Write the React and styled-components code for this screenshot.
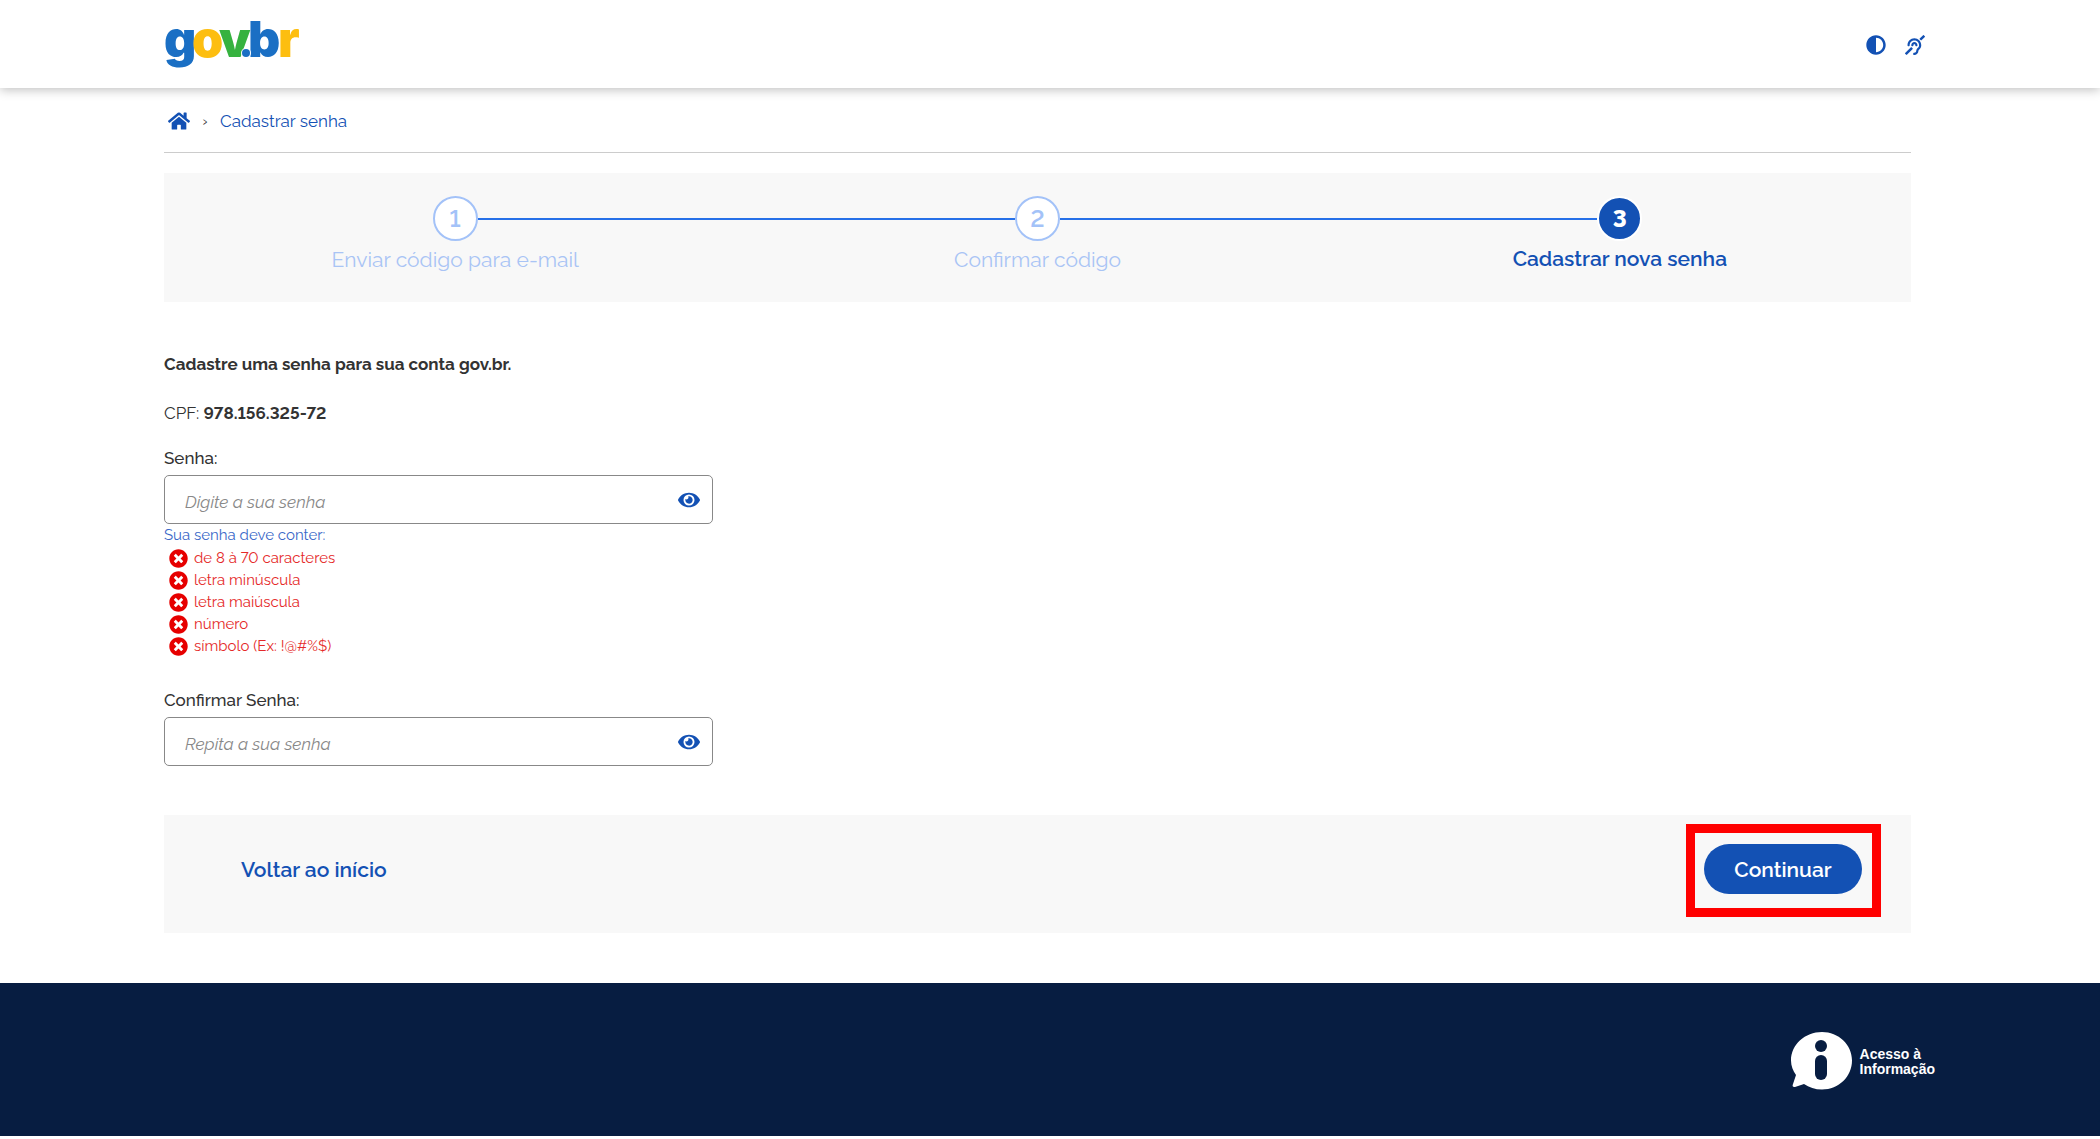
import React, { useState } from 'react';
import styled, { createGlobalStyle } from 'styled-components';
import { FaAdjust, FaDeaf, FaEye, FaHome, FaTimesCircle } from 'react-icons/fa';

const GlobalStyle = createGlobalStyle`
  * {
    box-sizing: border-box;
  }

  body {
    margin: 0;
    background: #ffffff;
    color: #333333;
    font-family: Raleway, Lato, sans-serif;
    font-size: 17px;
    font-variant-numeric: lining-nums;
    line-height: 24px;
  }

  button,
  input {
    font-family: inherit;
  }
`;

const Header = styled.header`
  display: flex;
  align-items: center;
  justify-content: space-between;
  height: 88px;
  padding: 0 175px 0 164px;
  background: #ffffff;
  box-shadow: 0 2px 10px rgba(0, 0, 0, 0.25);
`;

const LogoLink = styled.a`
  display: block;
  height: 80px;
`;

const LogoText = styled.text`
  font-family: Inter, sans-serif;
  font-size: 50px;
  font-weight: 900;
`;

const HeaderActions = styled.div`
  display: flex;
  gap: 19px;
  padding-top: 1px;
`;

const IconButton = styled.button`
  display: flex;
  padding: 0;
  border: 0;
  background: none;
  color: #1351b4;
  font-size: ${({ $size }) => $size}px;
  cursor: pointer;
`;

const Main = styled.main`
  padding: 0 189px 50px 164px;
`;

const Breadcrumb = styled.nav`
  display: flex;
  align-items: center;
  height: 65px;
  padding: 1px 0 0 4px;
  border-bottom: 1px solid #cccccc;
`;

const BreadcrumbLink = styled.a`
  display: flex;
  color: #1351b4;
  font-size: ${({ $size }) => $size}px;
  text-decoration: none;
`;

const Separator = styled.span`
  width: 30px;
  color: #333333;
  font-size: 14px;
  text-align: center;
`;

const Stepper = styled.ol`
  display: grid;
  grid-template-columns: repeat(3, 1fr);
  height: 129px;
  margin: 20px 0 0;
  padding: 23px 0 0;
  background: #f8f8f8;
  list-style: none;
`;

const Step = styled.li`
  display: flex;
  flex-direction: column;
  align-items: center;
  gap: ${({ $active }) => ($active ? 6 : 7)}px;
  color: ${({ $active }) => ($active ? '#1351b4' : '#a9c4f5')};
  font-size: 21px;
  font-weight: ${({ $active }) => ($active ? 600 : 400)};
`;

const StepTrack = styled.div`
  display: grid;
  grid-template-columns: 1fr auto 1fr;
  align-items: center;
  width: 100%;
`;

const StepLine = styled.span`
  height: 2px;
  background: ${({ $visible }) => ($visible ? '#2670e8' : 'transparent')};
`;

const StepNumber = styled.span`
  display: flex;
  align-items: center;
  justify-content: center;
  width: 45px;
  height: 45px;
  border: 2px solid ${({ $active }) => ($active ? '#ffffff' : '#a3c2f8')};
  border-radius: 50%;
  background: ${({ $active }) => ($active ? '#1351b4' : '#ffffff')};
  color: ${({ $active }) => ($active ? '#ffffff' : '#a3c2f8')};
  font-size: 24px;
  font-weight: ${({ $active }) => ($active ? 800 : 600)};
`;

const Title = styled.h1`
  margin: 50px 0 25px;
  font-size: 17px;
  font-weight: 700;
  line-height: 24px;
`;

const Cpf = styled.p`
  margin: 0 0 21px;
`;

const Field = styled.div`
  max-width: 549px;
  margin-top: ${({ $spaced }) => ($spaced ? 31 : 0)}px;
`;

const Label = styled.label`
  display: block;
  margin-bottom: 5px;
  font-weight: 500;
`;

const InputBox = styled.div`
  display: flex;
  align-items: center;
  height: 49px;
  padding-right: 12px;
  border: 1px solid #888888;
  border-radius: 5px;
`;

const Input = styled.input`
  flex: 1;
  min-width: 0;
  height: 100%;
  padding: 4px 20px 0;
  border: 0;
  outline: 0;
  background: none;
  color: #333333;
  font-size: 17px;

  &::placeholder {
    color: #888888;
    font-style: italic;
    opacity: 1;
  }
`;

const Rules = styled.div`
  color: #3a68c8;
  font-size: 15px;
  line-height: 22px;
`;

const RuleList = styled.ul`
  margin: 0;
  padding: 1px 0 0 5px;
  list-style: none;
`;

const Rule = styled.li`
  display: flex;
  align-items: center;
  gap: 6px;
  color: #e52929;

  svg {
    color: #e60000;
    font-size: 19px;
  }
`;

const Actions = styled.div`
  display: flex;
  align-items: flex-start;
  justify-content: space-between;
  height: 118px;
  margin-top: 49px;
  padding: 9px 30px 0 77px;
  background: #f8f8f8;
`;

const BackLink = styled.a`
  margin-top: 34px;
  color: #1351b4;
  font-size: 21px;
  font-weight: 600;
  text-decoration: none;
`;

const Highlight = styled.div`
  height: 93px;
  padding: 11px 10px 0 9px;
  border: 9px solid #ff0000;
`;

const SubmitButton = styled.button`
  width: 158px;
  height: 50px;
  border: 0;
  border-radius: 25px;
  background: #1351b4;
  color: #ffffff;
  font-size: 21px;
  font-weight: 600;
  cursor: pointer;
`;

const Footer = styled.footer`
  display: flex;
  justify-content: flex-end;
  height: 153px;
  padding: 49px 165px 0;
  background: #071d41;
`;

const InfoLink = styled.a`
  display: flex;
  align-items: flex-start;
  gap: 8px;
  color: #ffffff;
  font-family: 'Liberation Sans', sans-serif;
  font-size: 14px;
  font-weight: 700;
  line-height: 15px;
  text-decoration: none;

  span {
    margin-top: 15px;
  }
`;

const STEPS = ['Enviar código para e-mail', 'Confirmar código', 'Cadastrar nova senha'];
const CURRENT_STEP = 2;

const RULES = [
  'de 8 à 70 caracteres',
  'letra minúscula',
  'letra maiúscula',
  'número',
  'símbolo (Ex: !@#%$)',
];

const Logo = () => (
  <svg width="144" height="80" viewBox="0 0 144 80" role="img" aria-label="gov.br">
    <LogoText x="0" y="53" fill="#1a6fc4">g</LogoText>
    <LogoText x="28" y="53" fill="#fdbe10">o</LogoText>
    <LogoText x="55" y="53" fill="#36b23f">v</LogoText>
    <LogoText x="84" y="53" fill="#1a6fc4">b</LogoText>
    <LogoText x="114" y="53" fill="#fdbe10">r</LogoText>
    <circle cx="82" cy="49" r="5" fill="#ffffff" />
    <circle cx="82" cy="49" r="4" fill="#1a6fc4" />
  </svg>
);

const InfoIcon = () => (
  <svg width="61" height="58" viewBox="0 0 61 58" aria-hidden="true">
    <path
      d="M31 0C47.500 0 61 12.500 61 28.500S48 57.500 31 57.500C24 57.500 18 55.500 13 52L4 55C2 55.500 1 54 2 52L5 43C2 39 0 34 0 28.500C0 12.500 14 0 31 0Z"
      fill="#ffffff"
    />
    <circle cx="30" cy="14" r="6" fill="#071d41" />
    <rect x="24" y="23" width="12" height="25" rx="6" fill="#071d41" />
  </svg>
);

const PasswordField = ({ id, label, placeholder, spaced, children }) => {
  const [visible, setVisible] = useState(false);

  return (
    <Field $spaced={spaced}>
      <Label htmlFor={id}>{label}</Label>
      <InputBox>
        <Input id={id} type={visible ? 'text' : 'password'} placeholder={placeholder} />
        <IconButton
          type="button"
          $size={22}
          aria-label="Mostrar senha"
          onClick={() => setVisible(!visible)}
        >
          <FaEye />
        </IconButton>
      </InputBox>
      {children}
    </Field>
  );
};

export default function App() {
  return (
    <>
      <GlobalStyle />
      <Header>
        <LogoLink href="#">
          <Logo />
        </LogoLink>
        <HeaderActions>
          <IconButton type="button" $size={20} aria-label="Alto contraste">
            <FaAdjust />
          </IconButton>
          <IconButton type="button" $size={20} aria-label="VLibras">
            <FaDeaf />
          </IconButton>
        </HeaderActions>
      </Header>

      <Main>
        <Breadcrumb>
          <BreadcrumbLink href="#" $size={22} aria-label="Início">
            <FaHome />
          </BreadcrumbLink>
          <Separator>›</Separator>
          <BreadcrumbLink href="#" $size={17}>
            Cadastrar senha
          </BreadcrumbLink>
        </Breadcrumb>

        <Stepper>
          {STEPS.map((step, i) => (
            <Step key={step} $active={i === CURRENT_STEP}>
              <StepTrack>
                <StepLine $visible={i > 0} />
                <StepNumber $active={i === CURRENT_STEP}>{i + 1}</StepNumber>
                <StepLine $visible={i < STEPS.length - 1} />
              </StepTrack>
              {step}
            </Step>
          ))}
        </Stepper>

        <form onSubmit={(e) => e.preventDefault()}>
          <Title>Cadastre uma senha para sua conta gov.br.</Title>
          <Cpf>
            CPF: <strong>978.156.325-72</strong>
          </Cpf>

          <PasswordField id="senha" label="Senha:" placeholder="Digite a sua senha">
            <Rules>
              Sua senha deve conter:
              <RuleList>
                {RULES.map((rule) => (
                  <Rule key={rule}>
                    <FaTimesCircle />
                    {rule}
                  </Rule>
                ))}
              </RuleList>
            </Rules>
          </PasswordField>
          <PasswordField
            id="confirmar"
            label="Confirmar Senha:"
            placeholder="Repita a sua senha"
            spaced
          />

          <Actions>
            <BackLink href="#">Voltar ao início</BackLink>
            <Highlight>
              <SubmitButton type="submit">Continuar</SubmitButton>
            </Highlight>
          </Actions>
        </form>
      </Main>

      <Footer>
        <InfoLink href="#">
          <InfoIcon />
          <span>
            Acesso à
            <br />
            Informação
          </span>
        </InfoLink>
      </Footer>
    </>
  );
}
